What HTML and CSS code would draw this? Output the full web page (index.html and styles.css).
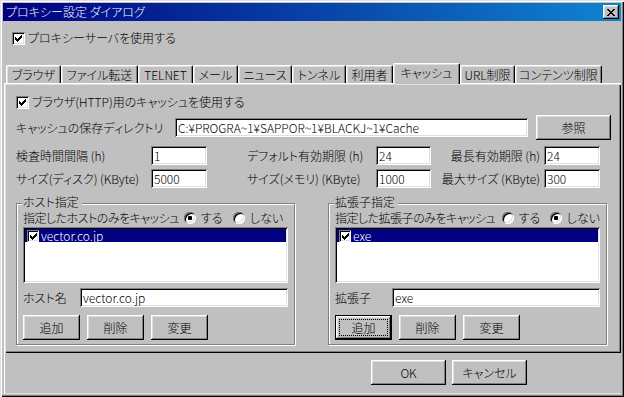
FILE: index.html
```html
<!DOCTYPE html>
<html lang="ja">
<head>
  <meta charset="UTF-8" />
  <meta name="viewport" content="width=device-width, initial-scale=1.0" />
  <title>プロキシー設定 ダイアログ</title>
  <link rel="stylesheet" href="styles.css">
</head>
<body>
  <div class="window">
    <div class="titlebar">
      <span class="title">プロキシー設定 ダイアログ</span>
      <div class="close-btn">
        <svg width="8" height="7" viewBox="0 0 8 7" shape-rendering="crispEdges"><path d="M0 0h2v1h-2zM6 0h2v1h-2zM1 1h2v1h-2zM5 1h2v1h-2zM2 2h4v1h-4zM3 3h2v1h-2zM2 4h4v1h-4zM1 5h2v1h-2zM5 5h2v1h-2zM0 6h2v1h-2zM6 6h2v1h-2z" fill="#000"/></svg>
      </div>
    </div>

    <div class="check main-check">
      <span class="box"><svg width="7" height="7" viewBox="0 0 7 7" shape-rendering="crispEdges"><path d="M0 2h1v3h-1zM1 3h1v3h-1zM2 4h1v3h-1zM3 3h1v3h-1zM4 2h1v3h-1zM5 1h1v3h-1zM6 0h1v3h-1z"/></svg></span>
      <span>プロキシーサーバを使用する</span>
    </div>

    <div class="tabs">
      <div class="tab">ブラウザ</div>
      <div class="tab">ファイル転送</div>
      <div class="tab">TELNET</div>
      <div class="tab">メール</div>
      <div class="tab">ニュース</div>
      <div class="tab">トンネル</div>
      <div class="tab">利用者</div>
      <div class="tab active">キャッシュ</div>
      <div class="tab">URL制限</div>
      <div class="tab">コンテンツ制限</div>
    </div>

    <div class="panel">
      <div class="check">
        <span class="box"><svg width="7" height="7" viewBox="0 0 7 7" shape-rendering="crispEdges"><path d="M0 2h1v3h-1zM1 3h1v3h-1zM2 4h1v3h-1zM3 3h1v3h-1zM4 2h1v3h-1zM5 1h1v3h-1zM6 0h1v3h-1z"/></svg></span>
        <span>ブラウザ(HTTP)用のキャッシュを使用する</span>
      </div>

      <div class="dir-row">
        <span class="dir-label">キャッシュの保存ディレクトリ</span>
        <div class="field dir-field">C:¥PROGRA~1¥SAPPOR~1¥BLACKJ~1¥Cache</div>
        <div class="btn browse">参照</div>
      </div>

      <div class="param-grid">
        <span>検査時間間隔 (h)</span>
        <div class="field">1</div>
        <span class="mid">デフォルト有効期限 (h)</span>
        <div class="field">24</div>
        <span class="right">最長有効期限 (h)</span>
        <div class="field">24</div>

        <span>サイズ(ディスク) (KByte)</span>
        <div class="field">5000</div>
        <span class="mid">サイズ(メモリ) (KByte)</span>
        <div class="field">1000</div>
        <span class="right">最大サイズ (KByte)</span>
        <div class="field">300</div>
      </div>

      <div class="groups">
        <div class="group">
          <span class="group-title">ホスト指定</span>
          <div class="radio-row">
            <span class="radio-label host">指定したホストのみをキャッシュ</span>
            <span class="option first"><span class="radio on"></span>する</span>
            <span class="option"><span class="radio"></span>しない</span>
          </div>
          <div class="listbox">
            <div class="list-item">
              <span class="box small"><svg width="7" height="7" viewBox="0 0 7 7" shape-rendering="crispEdges"><path d="M0 2h1v3h-1zM1 3h1v3h-1zM2 4h1v3h-1zM3 3h1v3h-1zM4 2h1v3h-1zM5 1h1v3h-1zM6 0h1v3h-1z"/></svg></span>
              <span>vector.co.jp</span>
            </div>
          </div>
          <div class="name-row">
            <span class="name-label">ホスト名</span>
            <div class="field">vector.co.jp</div>
          </div>
          <div class="btn-row">
            <div class="btn">追加</div>
            <div class="btn">削除</div>
            <div class="btn">変更</div>
          </div>
        </div>

        <div class="group">
          <span class="group-title">拡張子指定</span>
          <div class="radio-row">
            <span class="radio-label ext">指定した拡張子のみをキャッシュ</span>
            <span class="option first"><span class="radio"></span>する</span>
            <span class="option"><span class="radio on"></span>しない</span>
          </div>
          <div class="listbox">
            <div class="list-item">
              <span class="box small"><svg width="7" height="7" viewBox="0 0 7 7" shape-rendering="crispEdges"><path d="M0 2h1v3h-1zM1 3h1v3h-1zM2 4h1v3h-1zM3 3h1v3h-1zM4 2h1v3h-1zM5 1h1v3h-1zM6 0h1v3h-1z"/></svg></span>
              <span>exe</span>
            </div>
          </div>
          <div class="name-row">
            <span class="name-label">拡張子</span>
            <div class="field">exe</div>
          </div>
          <div class="btn-row">
            <div class="btn default"><span class="focus">追加</span></div>
            <div class="btn">削除</div>
            <div class="btn">変更</div>
          </div>
        </div>
      </div>
    </div>

    <div class="footer">
      <div class="btn">OK</div>
      <div class="btn">キャンセル</div>
    </div>
  </div>
</body>
</html>
```

FILE: styles.css
```css
* {
  box-sizing: border-box;
  margin: 0;
  padding: 0;
}

body {
  background: #c0c0c0;
  font-family: "Noto Sans CJK JP", "Noto Sans", sans-serif;
  font-size: 12px;
  font-weight: 300;
  line-height: 14px;
  font-feature-settings: "palt";
  color: #000;
}

.window {
  width: 624px;
  height: 397px;
  padding: 3px;
  display: flex;
  flex-direction: column;
  background: #c0c0c0;
  box-shadow: inset 1px 1px #dfdfdf, inset 2px 2px #fff,
              inset -1px -1px #000, inset -2px -2px #808080;
}

/* title bar */
.titlebar {
  height: 18px;
  display: flex;
  align-items: center;
  justify-content: space-between;
  padding: 0 2px 0 3px;
  background: linear-gradient(to right, #000080, #1084d0);
  color: #fff;
}

.close-btn {
  width: 16px;
  height: 14px;
  display: flex;
  align-items: center;
  justify-content: center;
  background: #c0c0c0;
  box-shadow: inset -1px -1px #000, inset 1px 1px #fff,
              inset -2px -2px #808080, inset 2px 2px #dfdfdf;
}

/* checkboxes */
.check {
  height: 14px;
  display: flex;
  align-items: center;
  gap: 3px;
}

.main-check {
  margin: 10px 0 0 9px;
}

.box {
  width: 13px;
  height: 13px;
  display: flex;
  align-items: center;
  justify-content: center;
  background: #fff;
  box-shadow: inset 1px 1px #808080, inset -1px -1px #fff,
              inset 2px 2px #000, inset -2px -2px #dfdfdf;
}

.box.small {
  width: 12px;
  height: 12px;
  justify-content: flex-start;
  align-items: flex-start;
  padding: 3px 0 0 3px;
}

.box svg {
  display: block;
}

/* tabs */
.tabs {
  height: 20px;
  margin: 18px 0 0 3px;
  display: flex;
  align-items: flex-end;
}

.tab {
  height: 18px;
  display: flex;
  align-items: center;
  justify-content: center;
  background: #c0c0c0;
  border-top: 1px solid #fff;
  border-left: 1px solid #fff;
  border-right: 1px solid #000;
  border-radius: 2px 2px 0 0;
  box-shadow: inset -1px 0 #808080, inset 1px 1px #dfdfdf;
  white-space: nowrap;
}

.tab:nth-child(1) { width: 55px; }
.tab:nth-child(2) { width: 77px; }
.tab:nth-child(3) { width: 55px; }
.tab:nth-child(4) { width: 45px; }
.tab:nth-child(5) { width: 54px; }
.tab:nth-child(6) { width: 54px; }
.tab:nth-child(7) { width: 47px; }
.tab:nth-child(8) { width: 67px; }
.tab:nth-child(9) { width: 55px; }
.tab:nth-child(10) { width: 87px; }

.tab.active {
  height: 21px;
  margin-bottom: -1px;
  padding-bottom: 3px;
  z-index: 1;
}

/* tab page */
.panel {
  width: 617px;
  height: 270px;
  margin-left: 1px;
  padding: 12px 0 0 12px;
  display: flex;
  flex-direction: column;
  box-shadow: inset 1px 1px #fff, inset 2px 2px #dfdfdf,
              inset -1px -1px #000, inset -2px -2px #808080;
}

.field {
  height: 19px;
  padding: 0 3px;
  display: flex;
  align-items: center;
  background: #fff;
  white-space: nowrap;
  overflow: hidden;
  box-shadow: inset 1px 1px #808080, inset -1px -1px #fff,
              inset 2px 2px #000, inset -2px -2px #dfdfdf;
}

.btn {
  height: 25px;
  display: flex;
  align-items: center;
  justify-content: center;
  background: #c0c0c0;
  box-shadow: inset -1px -1px #000, inset 1px 1px #fff,
              inset -2px -2px #808080, inset 2px 2px #dfdfdf;
}

.btn.default {
  box-shadow: inset 0 0 0 1px #000, inset -2px -2px #000, inset 2px 2px #fff,
              inset -3px -3px #808080, inset 3px 3px #dfdfdf;
}

.focus {
  width: calc(100% - 8px);
  height: calc(100% - 8px);
  display: flex;
  align-items: center;
  justify-content: center;
  border: 1px dotted #000;
}

.dir-row {
  height: 25px;
  margin-top: 6px;
  display: flex;
  align-items: center;
}

.dir-label {
  width: 159px;
}

.dir-field {
  width: 353px;
}

.browse {
  width: 75px;
  margin-left: 8px;
}

.param-grid {
  margin-top: 6px;
  display: grid;
  grid-template-columns: 135px 56px 169px 55px 113px 56px;
  grid-template-rows: 19px 19px;
  row-gap: 4px;
  align-items: center;
  white-space: nowrap;
}

.param-grid .mid {
  padding-left: 40px;
}

.param-grid .right {
  text-align: right;
  padding-right: 4px;
}

/* group boxes */
.groups {
  margin-top: 15px;
  display: flex;
  gap: 33px;
}

.group {
  width: 279px;
  padding: 0 6px 4px;
  display: flex;
  flex-direction: column;
  border: 1px solid #808080;
  box-shadow: 1px 1px #fff, inset 1px 1px #fff;
}

.group-title {
  align-self: flex-start;
  height: 13px;
  line-height: 13px;
  margin: -9px 0 0 -1px;
  padding: 0 3px 0 1px;
  background: #c0c0c0;
}

.radio-row {
  height: 13px;
  line-height: 13px;
  margin-top: 3px;
  display: flex;
  align-items: center;
  white-space: nowrap;
}

.radio-label {
  letter-spacing: -0.5px;
}

.radio-label.host { width: 161px; }
.radio-label.ext { width: 170px; }

.option {
  display: flex;
  align-items: center;
  gap: 5px;
}

.option.first {
  width: 49px;
}

.radio {
  width: 12px;
  height: 12px;
  border-radius: 50%;
  background: #fff;
  box-shadow: inset 1px 1px #808080, inset -1px -1px #fff,
              inset 2px 2px #000, inset -2px -2px #dfdfdf;
}

.radio.on {
  background: radial-gradient(circle, #000 0 2px, #fff 2.5px);
}

.listbox {
  height: 56px;
  margin-top: 3px;
  padding: 2px;
  background: #fff;
  box-shadow: inset 1px 1px #808080, inset -1px -1px #fff,
              inset 2px 2px #000, inset -2px -2px #dfdfdf;
}

.list-item {
  height: 13px;
  padding-left: 2px;
  display: flex;
  align-items: center;
  gap: 2px;
  background: #000080;
  color: #fff;
}

.name-row {
  height: 19px;
  margin-top: 5px;
  display: flex;
  align-items: center;
}

.name-label {
  width: 57px;
}

.name-row .field {
  flex: 1;
}

.btn-row {
  margin-top: 8px;
  display: flex;
  gap: 7px;
}

.btn-row .btn {
  width: 57px;
}

/* bottom buttons */
.footer {
  flex: 1;
  margin-left: 1px;
  padding: 7px 0 0 367px;
  display: flex;
  align-items: flex-start;
  gap: 6px;
  box-shadow: inset 1px 0 #fff, inset 0 -1px #dfdfdf;
}

.footer .btn {
  width: 75px;
}
```
